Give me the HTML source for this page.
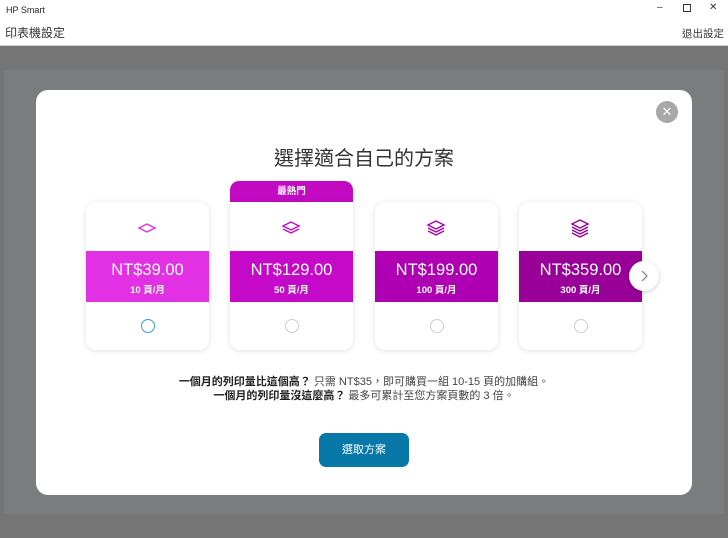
<!DOCTYPE html>
<html><head><meta charset="utf-8"><style>
*{margin:0;padding:0;box-sizing:border-box}
body{width:728px;height:538px;overflow:hidden;background:#757575;font-family:"Liberation Sans","Noto Sans CJK TC",sans-serif;position:relative}
.top{position:absolute;left:0;top:0;width:728px;height:46px;background:#fff;border-bottom:1px solid #d0d0d0}
.abs{position:absolute}
.inner{position:absolute;left:4px;top:70px;width:720px;height:444px;background:#7b7c7d}
.modal{position:absolute;left:36px;top:90px;width:656px;height:405px;background:#fff;border-radius:12px}
.card{position:absolute;top:202px;width:123px;height:148px;background:#fff;border-radius:10px;box-shadow:0 1px 6px rgba(0,0,0,.12);overflow:hidden}
.band{position:absolute;left:0;top:49px;width:123px;height:51px;color:#fff;text-align:center}
.band b{display:block;font-size:16.5px;font-weight:normal;margin-top:10px;line-height:18px}
.band i{display:block;font-style:normal;font-size:9.5px;font-weight:bold;margin-top:3px}
.radio{position:absolute;left:55px;top:117px;width:14px;height:14px;border-radius:50%;border:1.5px solid #ccc}
.ico{position:absolute;left:50px;top:17px}
</style></head><body>
<div class="top">
<div class="abs" style="left:6px;top:5px;font-size:9px;color:#222">HP Smart</div>
<div class="abs" style="left:657px;top:2px;font-size:10px;color:#333">–</div>
<div class="abs" style="left:683px;top:4px;width:8px;height:8px;border:1.3px solid #333"></div>
<div class="abs" style="left:709px;top:2px;font-size:10px;color:#333">✕</div>
<div class="abs" style="left:5px;top:24px;font-size:12px;color:#333">印表機設定</div>
<div class="abs" style="left:682px;top:26px;font-size:10.5px;color:#333">退出設定</div>
</div>
<div class="inner"></div>
<div class="modal">
<div class="abs" style="left:620px;top:11px;width:22px;height:22px;border-radius:50%;background:#a8a8a8;color:#fff;text-align:center;font-size:13px;line-height:22px">✕</div>
<div class="abs" style="left:0;top:52px;width:656px;text-align:center;font-size:20px;color:#333">選擇適合自己的方案</div>
<div class="abs" style="left:0;top:285px;width:656px;text-align:center;font-size:11px;color:#444;line-height:14px"><b style="color:#222">一個月的列印量比這個高？</b> 只需 NT$35，即可購買一組 10-15 頁的加購組。<br><b style="color:#222">一個月的列印量沒這麼高？</b> 最多可累計至您方案頁數的 3 倍。</div>
<div class="abs" style="left:283px;top:343px;width:90px;height:34px;border-radius:7px;background:#0778a8;color:#fff;text-align:center;line-height:34px;font-size:11px">選取方案</div>
</div>
<div class="abs" style="left:230px;top:181px;width:123px;height:30px;background:#c30ac3;border-radius:9px 9px 0 0;color:#fff;font-size:9.5px;font-weight:bold;text-align:center;line-height:22px">最熱門</div>
<div class="card" style="left:86px"><svg class="ico" width="22" height="18" viewBox="0 0 22 18"><path d="M11 5L19 9L11 13L3 9Z" fill="none" stroke="#e02ee0" stroke-width="1.4"/></svg><div class="band" style="background:#e230e4"><b>NT$39.00</b><i>10 頁/月</i></div><div class="radio" style="border-color:#2b9fd8"></div></div>
<div class="card" style="left:230px;border-radius:0 0 10px 10px"><svg class="ico" width="22" height="18" viewBox="0 0 22 18"><path d="M11 3L19 7L11 11L3 7Z M3 10L11 14L19 10" fill="none" stroke="#c50ac8" stroke-width="1.4"/></svg><div class="band" style="background:#c40ac8"><b>NT$129.00</b><i>50 頁/月</i></div><div class="radio"></div></div>
<div class="card" style="left:375px"><svg class="ico" width="22" height="18" viewBox="0 0 22 18"><path d="M11 2L19 6L11 10L3 6Z M3 9L11 13L19 9 M3 12L11 16L19 12" fill="none" stroke="#ad00b1" stroke-width="1.4"/></svg><div class="band" style="background:#ae00b2"><b>NT$199.00</b><i>100 頁/月</i></div><div class="radio"></div></div>
<div class="card" style="left:519px"><svg class="ico" width="22" height="20" viewBox="0 0 22 20"><path d="M11 1L19 5L11 9L3 5Z M3 8L11 12L19 8 M3 11L11 15L19 11 M3 14L11 18L19 14" fill="none" stroke="#98009a" stroke-width="1.4"/></svg><div class="band" style="background:#980098"><b>NT$359.00</b><i>300 頁/月</i></div><div class="radio"></div></div>
<div class="abs" style="left:629px;top:261px;width:30px;height:30px;border-radius:50%;background:#fff;box-shadow:0 1px 5px rgba(0,0,0,.2)"><svg width="30" height="30"><path d="M13 10L18 15L13 20" fill="none" stroke="#888" stroke-width="1.3"/></svg></div>
</body></html>
